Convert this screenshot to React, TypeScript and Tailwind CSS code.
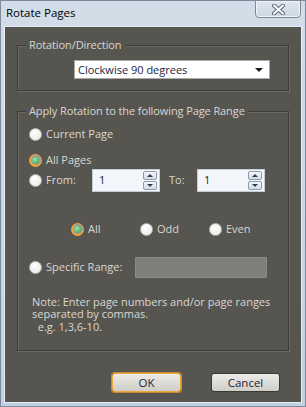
import React from "react";

function Radio({ checked = false }: { checked?: boolean }) {
  if (checked) {
    return (
      <span className="flex h-[13px] w-[13px] shrink-0 items-center justify-center rounded-full bg-[#f3a43c]">
        <span className="flex h-[10px] w-[10px] items-center justify-center rounded-full bg-[#9a9a96]">
          <span className="h-[7px] w-[7px] rounded-full bg-[radial-gradient(circle_at_40%_35%,#9be3a8,#2f9e4e)]" />
        </span>
      </span>
    );
  }
  return (
    <span className="h-[13px] w-[13px] shrink-0 rounded-full border border-[#b9b9b4] bg-[radial-gradient(circle_at_40%_35%,#ffffff,#e6e6e6)]" />
  );
}

function SpinBox({ value }: { value: string }) {
  return (
    <div className="flex h-[23px] w-[68px] items-center justify-between border border-[#c6ccd4] bg-[#f3f6fb] pl-[6px] pr-[2px]">
      <span className="text-[11px] text-[#1e1e3c]">{value}</span>
      <div className="flex flex-col gap-[1px]">
        {[0, 1].map((i) => (
          <span
            key={i}
            className="flex h-[9px] w-[14px] items-center justify-center rounded-[2px] border border-[#8e9bab] bg-gradient-to-b from-[#f4f6f9] to-[#d6dce4]"
          >
            <svg width="6" height="3" viewBox="0 0 6 3">
              <path d={i === 0 ? "M0 3 L3 0 L6 3 Z" : "M0 0 L6 0 L3 3 Z"} fill="#2c3e58" />
            </svg>
          </span>
        ))}
      </div>
    </div>
  );
}

function Group({ title, className, children }: { title: string; className: string; children: React.ReactNode }) {
  return (
    <div className={`relative mx-[12px] border border-[#3c3b37] shadow-[inset_1px_1px_0_#6b6963,1px_1px_0_#6b6963] ${className}`}>
      <span className="absolute -top-[8px] left-[8px] bg-[#57554f] px-[3px] leading-[14px] tracking-[-0.1px] text-[#d8d8d4]">{title}</span>
      {children}
    </div>
  );
}

export default function App() {
  return (
    <div
      className="flex h-[407px] w-[306px] flex-col border border-[#7d8a99] bg-gradient-to-b from-[#d3dde8] via-[#c9d6e4] to-[#c2d1e1] text-[11px]"
      style={{ fontFamily: '"Open Sans", "Noto Sans", sans-serif' }}
    >
      <div className="flex h-[25px] items-start justify-between">
        <span className="pl-[5px] pt-[4px] text-[11.5px] leading-[16px] text-black">Rotate Pages</span>
        <button className="mr-[4px] -mt-px flex h-[18px] w-[46px] items-center justify-center rounded-b-[4px] border border-[#7e8a98] bg-gradient-to-b from-[#dfe6ee] to-[#cdd8e4] shadow-[inset_0_0_0_1px_#eef3f8]">
          <svg width="13" height="11" viewBox="0 0 13 11">
            <path d="M2 1.5 L11 9.5 M11 1.5 L2 9.5" stroke="#5c6878" strokeWidth="4" strokeLinecap="round" />
            <path d="M2 1.5 L11 9.5 M11 1.5 L2 9.5" stroke="#ffffff" strokeWidth="2" strokeLinecap="round" />
          </svg>
        </button>
      </div>

      <div className="mx-[3px] mb-[3px] flex flex-1 flex-col border border-[#e6edf4] bg-[#57554f] text-[#d8d8d4]">
        <Group title="Rotation/Direction" className="mt-[18px] h-[46px]">
          <div className="pl-[56px] pt-[14px]">
            <div className="flex h-[19px] w-[196px] items-center justify-between border border-[#a9a9a9] bg-white pl-[3px] pr-[6px]">
              <span className="text-[11px] leading-[14px] text-[#1e1e3c]">Clockwise 90 degrees</span>
              <svg width="8" height="4" viewBox="0 0 8 4">
                <path d="M0 0 L8 0 L4 4 Z" fill="#1a1a1a" />
              </svg>
            </div>
          </div>
        </Group>

        <Group title="Apply Rotation to the following Page Range" className="mt-[20px] h-[240px]">
          <div className="flex flex-col pl-[11px] pt-[14px]">
            <div className="flex h-[16px] items-center gap-[4px]">
              <Radio />
              <span>Current Page</span>
            </div>
            <div className="mt-[10px] flex h-[16px] items-center gap-[4px]">
              <Radio checked />
              <span>All Pages</span>
            </div>
            <div className="mt-px flex h-[23px] items-center">
              <div className="flex w-[63px] items-center gap-[4px]">
                <Radio />
                <span>From:</span>
              </div>
              <SpinBox value="1" />
              <span className="ml-[9px] w-[28px]">To:</span>
              <SpinBox value="1" />
            </div>
            <div className="ml-[42px] mt-[29px] flex h-[16px] items-center">
              {["All", "Odd", "Even"].map((l, i) => (
                <div key={l} className="flex w-[69px] items-center gap-[4px]">
                  <Radio checked={i === 0} />
                  <span>{l}</span>
                </div>
              ))}
            </div>
            <div className="mt-[20px] flex h-[21px] items-center">
              <div className="flex w-[106px] items-center gap-[4px]">
                <Radio />
                <span>Specific Range:</span>
              </div>
              <div className="h-[21px] w-[132px] rounded-[1px] border border-[#8a8984] bg-[#7f7e79]" />
            </div>
            <p className="mt-[18px] whitespace-pre pl-[3px] text-[11px] leading-[12.3px]">
              {"Note: Enter page numbers and/or page ranges\nseparated by commas.\n  e.g. 1,3,6-10."}
            </p>
          </div>
        </Group>

        <div className="mt-[22px] flex justify-end gap-[30px] pr-[21px]">
          <button className="h-[19px] w-[69px] rounded-[3px] border border-[#f0a73c] bg-gradient-to-b from-[#ecebe7] to-[#cfcdc7] text-[11.5px] leading-[15px] text-[#1e1e3c] shadow-[0_0_0_1px_#c98b35]">
            OK
          </button>
          <button className="h-[19px] w-[69px] rounded-[3px] border border-[#3a3935] bg-gradient-to-b from-[#ecebe7] to-[#cfcdc7] text-[11.5px] leading-[15px] text-[#1e1e3c]">
            Cancel
          </button>
        </div>
      </div>
    </div>
  );
}
